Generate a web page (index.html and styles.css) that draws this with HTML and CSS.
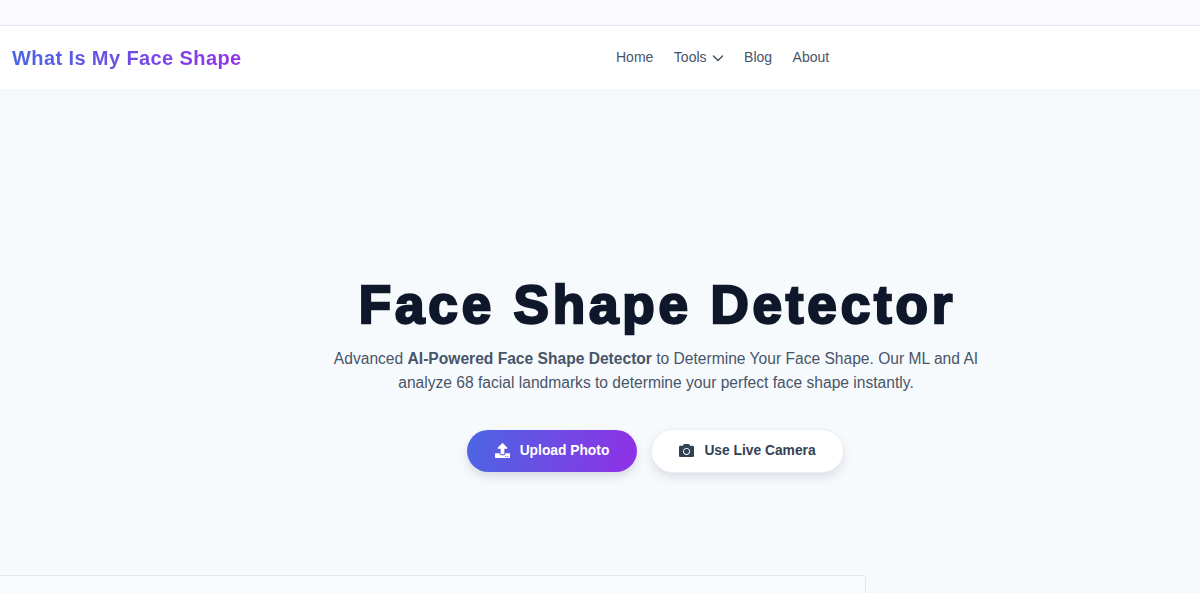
FILE: index.html
```html
<!DOCTYPE html>
<html lang="en">
<head>
<meta charset="utf-8">
<title>What Is My Face Shape</title>
<link rel="stylesheet" href="styles.css">
</head>
<body>
<div class="topstrip"></div>
<header class="navbar">
  <a class="logo" href="#">What Is My Face Shape</a>
  <nav class="navlinks">
    <a href="#">Home</a>
    <a href="#" class="tools">Tools
      <svg class="chev" viewBox="0 0 12 12" width="12" height="12" aria-hidden="true"><path d="M1.5 4l4.5 4.5L10.500 4" fill="none" stroke="currentColor" stroke-width="1.500" stroke-linecap="round" stroke-linejoin="round"/></svg>
    </a>
    <a href="#">Blog</a>
    <a href="#">About</a>
  </nav>
</header>
<main class="hero">
  <h1>Face Shape Detector</h1>
  <p class="lead">Advanced <strong>AI-Powered Face Shape Detector</strong> to Determine Your Face Shape. Our ML and AI analyze 68 facial landmarks to determine your perfect face shape instantly.</p>
  <div class="actions">
    <a class="btn primary" href="#">
      <svg viewBox="0 0 512 512" width="15" height="15" aria-hidden="true"><path fill="currentColor" d="M296 384h-80c-13.300 0-24-10.700-24-24V192h-87.700c-17.800 0-26.700-21.500-14.100-34.100L242.300 5.700c7.500-7.500 19.800-7.500 27.300 0l152.200 152.200c12.600 12.600 3.700 34.100-14.100 34.100H320v168c0 13.300-10.700 24-24 24zm216-8v112c0 13.300-10.700 24-24 24H24c-13.300 0-24-10.700-24-24V376c0-13.300 10.700-24 24-24h136v8c0 30.900 25.100 56 56 56h80c30.900 0 56-25.100 56-56v-8h136c13.300 0 24 10.700 24 24zm-124 88c0-11-9-20-20-20s-20 9-20 20 9 20 20 20 20-9 20-20zm64 0c0-11-9-20-20-20s-20 9-20 20 9 20 20 20 20-9 20-20z"/></svg>
      Upload Photo</a>
    <a class="btn secondary" href="#">
      <svg viewBox="0 0 512 512" width="15" height="15" aria-hidden="true"><path fill="currentColor" d="M512 144v288c0 26.500-21.500 48-48 48H48c-26.500 0-48-21.500-48-48V144c0-26.500 21.500-48 48-48h88l12.300-32.900c7-18.700 24.900-31.100 44.900-31.100h125.500c20 0 37.900 12.400 44.900 31.100L376 96h88c26.500 0 48 21.500 48 48zM376 288c0-66.200-53.800-120-120-120s-120 53.800-120 120 53.800 120 120 120 120-53.800 120-120zm-32 0c0 48.500-39.500 88-88 88s-88-39.500-88-88 39.500-88 88-88 88 39.500 88 88z"/></svg>
      Use Live Camera</a>
  </div>
</main>
<section class="panel"></section>
</body>
</html>
```
FILE: styles.css
```css
* { box-sizing: border-box; }
html, body { height: 100%; }
body {
  margin: 0;
  height: 593px;
  overflow: hidden;
  background: #f7fafd;
  font-family: "Liberation Sans", Arial, sans-serif;
  color: #475569;
}
a { text-decoration: none; color: inherit; }
.topstrip {
  height: 26px;
  background: #faf9fe;
  border-bottom: 1px solid #e5e3ef;
}
.navbar {
  height: 65px;
  background: #fff;
  border-bottom: 1px solid #eef0f4;
  display: flex;
  align-items: center;
  padding-left: 12px;
}
.logo {
  width: 604px;
  font-size: 20px;
  font-weight: 700;
  letter-spacing: 0.4px;
  background: linear-gradient(90deg, #4b66e3, #9333ea);
  background-size: 230px 100%;
  background-repeat: no-repeat;
  -webkit-background-clip: text;
  background-clip: text;
  color: transparent;
}
.navlinks {
  display: flex;
  align-items: center;
  gap: 20.500px;
  margin-bottom: 2px;
  font-size: 14px;
  color: #475569;
}
.tools { display: inline-flex; align-items: center; gap: 5px; }
.chev { display: block; margin-top: 1px; }
.hero {
  height: 484px;
  padding: 184px 0 0 0;
  margin-left: 115px;
  width: 1085px;
  display: flex;
  flex-direction: column;
  align-items: center;
}
h1 {
  margin: 0;
  font-size: 53px;
  line-height: 60px;
  font-weight: 900;
  letter-spacing: 3.850px;
  -webkit-text-stroke: 2.400px #0f172a;
  color: #0f172a;
  white-space: nowrap;
}
.lead {
  margin: 12px 3px 0 0;
  width: 672px;
  font-size: 15.600px;
  line-height: 24px;
  text-align: center;
  color: #475569;
}
.lead strong { font-weight: 700; color: #475569; }
.actions {
  display: flex;
  align-items: center;
  gap: 14px;
  margin: 34px 4px 0 0;
}
.btn {
  display: inline-flex;
  align-items: center;
  justify-content: center;
  gap: 10px;
  padding-bottom: 2px;
  border-radius: 999px;
  font-size: 13.800px;
  font-weight: 700;
}
.primary {
  width: 170px;
  height: 42px;
  color: #fff;
  background: linear-gradient(100deg, #4b66e3, #9030e6);
  box-shadow: 0 5px 10px rgba(30, 41, 59, 0.14);
}
.secondary {
  width: 193px;
  height: 44px;
  color: #334155;
  background: #fff;
  border: 1px solid #eceef3;
  box-shadow: 0 5px 10px rgba(30, 41, 59, 0.12);
}
.panel {
  margin-left: -20px;
  width: 886px;
  height: 18px;
  background: #f8fafc;
  border: 1px solid #e5e7eb;
  border-bottom: 0;
  border-radius: 4px 4px 0 0;
}
```
